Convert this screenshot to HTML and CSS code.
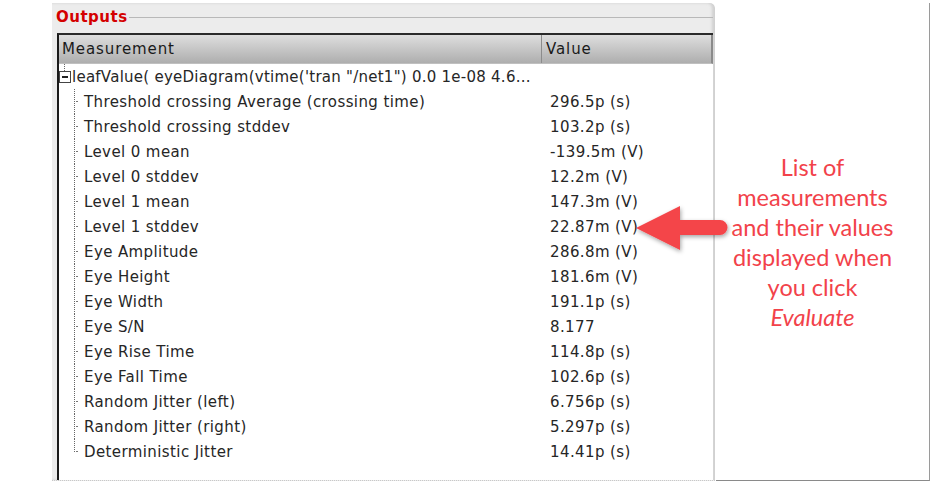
FILE: index.html
```html
<!DOCTYPE html>
<html lang="en">
<head>
    <meta charset="UTF-8">
    <title>Outputs</title>
    <link rel="stylesheet" href="styles.css">
</head>
<body>
    <div class="page">
        <div class="outputs">
            <div class="group-title">
                <span>Outputs</span>
                <div class="title-line"></div>
            </div>
            <div class="grid">
                <div class="grid-header">
                    <div class="col-name">Measurement</div>
                    <div class="col-value">Value</div>
                </div>
                <div class="grid-body">
                    <div class="row parent">
                        <span class="toggle"></span>
                        <div class="col-name">leafValue( eyeDiagram(vtime('tran "/net1") 0.0 1e-08 4.6...</div>
                    </div>
                    <div class="children">
                        <div class="row child"><div class="col-name">Threshold crossing Average (crossing time)</div><div class="col-value">296.5p (s)</div></div>
                        <div class="row child"><div class="col-name">Threshold crossing stddev</div><div class="col-value">103.2p (s)</div></div>
                        <div class="row child"><div class="col-name">Level 0 mean</div><div class="col-value">-139.5m (V)</div></div>
                        <div class="row child"><div class="col-name">Level 0 stddev</div><div class="col-value">12.2m (V)</div></div>
                        <div class="row child"><div class="col-name">Level 1 mean</div><div class="col-value">147.3m (V)</div></div>
                        <div class="row child"><div class="col-name">Level 1 stddev</div><div class="col-value">22.87m (V)</div></div>
                        <div class="row child"><div class="col-name">Eye Amplitude</div><div class="col-value">286.8m (V)</div></div>
                        <div class="row child"><div class="col-name">Eye Height</div><div class="col-value">181.6m (V)</div></div>
                        <div class="row child"><div class="col-name">Eye Width</div><div class="col-value">191.1p (s)</div></div>
                        <div class="row child"><div class="col-name">Eye S/N</div><div class="col-value">8.177</div></div>
                        <div class="row child"><div class="col-name">Eye Rise Time</div><div class="col-value">114.8p (s)</div></div>
                        <div class="row child"><div class="col-name">Eye Fall Time</div><div class="col-value">102.6p (s)</div></div>
                        <div class="row child"><div class="col-name">Random Jitter (left)</div><div class="col-value">6.756p (s)</div></div>
                        <div class="row child"><div class="col-name">Random Jitter (right)</div><div class="col-value">5.297p (s)</div></div>
                        <div class="row child"><div class="col-name">Deterministic Jitter</div><div class="col-value">14.41p (s)</div></div>
                    </div>
                </div>
            </div>
        </div>
        <div class="note">
            <p>List of<br>measurements<br>and their values<br>displayed when<br>you click<br><em>Evaluate</em></p>
        </div>
    </div>

    <!-- callout arrow pointing at the Level 1 stddev value -->
    <svg class="arrow" width="110" height="60" viewBox="0 0 110 60">
        <defs>
            <filter id="shadow" x="-20%" y="-30%" width="140%" height="160%">
                <feDropShadow dx="1" dy="2" stdDeviation="2" flood-color="#000" flood-opacity="0.35"/>
            </filter>
        </defs>
        <g filter="url(#shadow)">
            <polygon points="4,31 48,9 48,53" fill="#f4444a"/>
            <path d="M46 23 L88 23 A7.5 7.5 0 0 1 88 38 L46 38 Z" fill="#f4444a"/>
        </g>
    </svg>
</body>
</html>
```

FILE: styles.css
```css
body {
    margin: 0;
    background: #fff;
    font-family: "DejaVu Sans", Verdana, sans-serif;
    font-size: 15px;
    letter-spacing: 0.4px;
    color: #262626;
}
.page {
    display: flex;
    padding-top: 3px;
    padding-left: 52px;
    height: 478px;
}
.outputs {
    width: 663px;
    background: #ececec;
    border-top-right-radius: 5px;
    border-bottom: 1px dotted #c8c8c8;
    padding: 0 2px 0 5px;
    box-sizing: border-box;
    display: flex;
    flex-direction: column;
    box-shadow: inset -3px 0 3px #d0d0d0;
}
.group-title {
    display: flex;
    align-items: center;
    height: 26px;
    margin-left: -1px;
    margin-top: 1px;
}
.group-title span {
    color: #d40000;
    font-weight: bold;
    font-size: 15px;
    letter-spacing: 0.5px;
}
.title-line {
    flex: 1;
    height: 1px;
    background: #b8b8b8;
    margin-left: 1px;
    margin-top: 1px;
}
.grid {
    flex: 1;
    margin-top: 3px;
    border-top: 2px solid #2a2a2a;
    border-left: 2px solid #1a1a1a;
    background: #fff;
    display: flex;
    flex-direction: column;
}
.grid-header {
    display: flex;
    height: 28px;
    align-items: center;
    background: linear-gradient(#dedede, #aeaeae);
    border-right: 2px solid #8a8a8a;
    border-bottom: 1px solid #c0c0c0;
    color: #1a1a1a;
}
.grid-header .col-name {
    width: 479px;
    padding-left: 3px;
    align-self: stretch;
    display: flex;
    align-items: center;
    border-right: 1px solid #8c8c8c;
    letter-spacing: 0.9px;
}
.grid-header .col-value {
    padding-left: 4px;
    letter-spacing: 0.9px;
}
.row {
    display: flex;
    align-items: center;
    height: 25px;
    position: relative;
}
.parent .col-name {
    padding-left: 13px;
    width: 469px;
    white-space: nowrap;
    letter-spacing: 0.25px;
}
.toggle {
    position: absolute;
    left: 0;
    top: 7px;
    width: 10px;
    height: 10px;
    border: 1px solid #444;
    background: #fff;
}
.toggle::before {
    content: "";
    position: absolute;
    left: 2px;
    right: 2px;
    top: 4px;
    height: 2px;
    background: #222;
}
.toggle::after {
    content: "";
    position: absolute;
    left: 4px;
    top: -8px;
    height: 7px;
    border-left: 1px dotted #666;
}
.child .col-name {
    width: 457px;
    padding-left: 25px;
}
.col-value {
    padding-left: 9px;
}
/* tree guide lines */
.child::before {
    content: "";
    position: absolute;
    left: 15px;
    top: 0;
    bottom: 0;
    border-left: 1px dotted #666;
}
.child:last-child::before {
    bottom: 12px;
}
.child::after {
    content: "";
    position: absolute;
    left: 17px;
    top: 12px;
    width: 2px;
    height: 1px;
    background: #777;
}
.note {
    width: 214px;
    margin-left: 1px;
    background: #fff;
    border-right: 1px solid #9a9a9a;
    border-bottom: 1px solid #8a8a8a;
    display: flex;
    align-items: center;
    justify-content: center;
    padding-right: 20px;
    box-sizing: border-box;
}
.note p {
    margin: 1px 0 0;
    text-align: center;
    font-family: Lato, "Open Sans", sans-serif;
    font-size: 23.5px;
    letter-spacing: 0;
    line-height: 30px;
    color: #f2424a;
}
.arrow {
    position: absolute;
    left: 632px;
    top: 197px;
}
```
